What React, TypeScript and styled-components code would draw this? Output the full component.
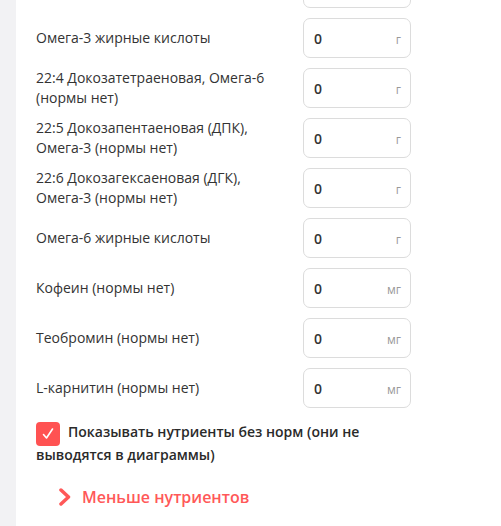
import styled, { createGlobalStyle } from 'styled-components';

const GlobalStyle = createGlobalStyle`
  html, body {
    margin: 0;
    padding: 0;
    background: #f2f2f4;
    font-family: "Open Sans", "Noto Sans", sans-serif;
    overflow: hidden;
  }
`;

const Page = styled.div`
  height: 526px;
  overflow: hidden;
  padding-left: 16px;
`;

const Panel = styled.div`
  background: #ffffff;
  height: 100%;
  padding-left: 20px;
  display: flex;
  flex-direction: column;
  align-items: flex-start;
`;

const List = styled.div`
  margin-top: -37px;
  display: flex;
  flex-direction: column;
`;

const Row = styled.div`
  display: grid;
  grid-template-columns: 267px 108px;
  align-items: center;
  height: 50px;
`;

const Label = styled.div`
  font-size: 14px;
  line-height: 20px;
  color: #333;
  padding-right: 24px;
`;

const Field = styled.div`
  box-sizing: border-box;
  height: 40px;
  border: 1px solid #dcdcdc;
  border-radius: 7px;
  display: flex;
  align-items: center;
  justify-content: space-between;
  padding: 0 9px 0 10px;
`;

const Value = styled.span`
  font-size: 14px;
  font-weight: 600;
  color: #333;
`;

const Unit = styled.span`
  font-size: 12px;
  color: #999;
  margin-top: 2px;
`;

const Toggle = styled.div`
  margin-top: 8px;
  font-size: 14px;
  font-weight: 600;
  line-height: 22px;
  color: #2a2a2a;
  width: 370px;
`;

const Box = styled.span`
  display: inline-flex;
  align-items: center;
  justify-content: center;
  width: 24px;
  height: 24px;
  border-radius: 4px;
  background: #ff5252;
  vertical-align: -4px;
  margin: -6px 8px -2px 0;
`;

const More = styled.div`
  display: flex;
  align-items: center;
  gap: 10px;
  margin-top: 20px;
  padding-left: 22px;
  font-size: 16px;
  font-weight: 600;
  color: #ff5858;
`;

const rows: [string, string][] = [
  ['Омега-3 (нормы нет)', 'г'],
  ['Омега-3 жирные кислоты', 'г'],
  ['22:4 Докозатетраеновая, Омега-6 (нормы нет)', 'г'],
  ['22:5 Докозапентаеновая (ДПК), Омега-3 (нормы нет)', 'г'],
  ['22:6 Докозагексаеновая (ДГК), Омега-3 (нормы нет)', 'г'],
  ['Омега-6 жирные кислоты', 'г'],
  ['Кофеин (нормы нет)', 'мг'],
  ['Теобромин (нормы нет)', 'мг'],
  ['L-карнитин (нормы нет)', 'мг'],
];

export default function App() {
  return (
    <Page>
      <GlobalStyle />
      <Panel>
        <List>
          {rows.map(([name, unit]) => (
            <Row key={name}>
              <Label>{name}</Label>
              <Field>
                <Value>0</Value>
                <Unit>{unit}</Unit>
              </Field>
            </Row>
          ))}
        </List>

        <Toggle>
          <Box>
            <svg width="14" height="14" viewBox="0 0 14 14">
              <path d="M2.5 7.5 L5.5 11 L11.5 2" stroke="#fff" strokeWidth="1.6" fill="none" strokeLinecap="round" strokeLinejoin="round" />
            </svg>
          </Box>
          Показывать нутриенты без норм (они не выводятся в диаграммы)
        </Toggle>

        <More>
          <svg width="14" height="18" viewBox="0 0 14 18">
            <path d="M3 2 L10.5 9 L3 16" stroke="#ff5858" strokeWidth="3.5" fill="none" strokeLinecap="round" strokeLinejoin="round" />
          </svg>
          Меньше нутриентов
        </More>
      </Panel>
    </Page>
  );
}
